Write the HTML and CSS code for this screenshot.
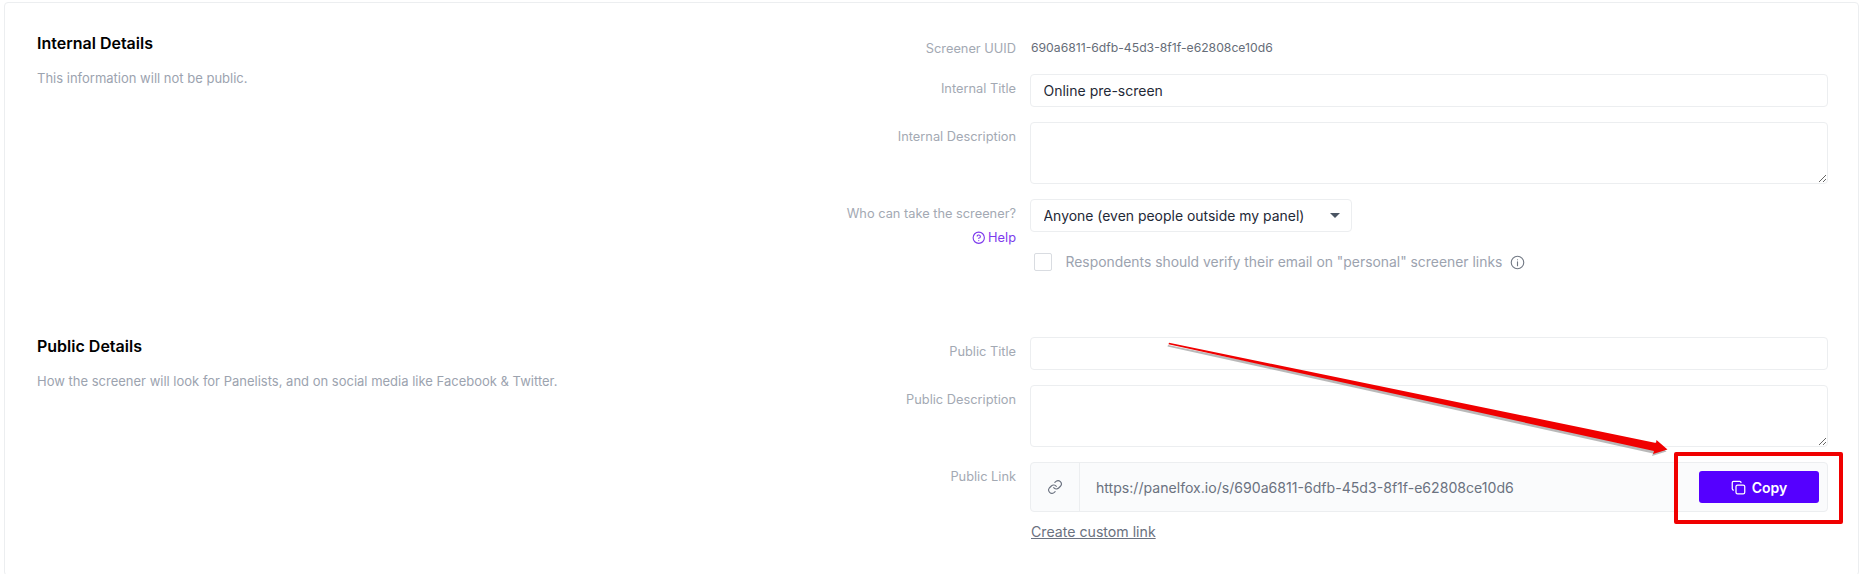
FILE: index.html
```html
<!DOCTYPE html>
<html lang="en">
<head>
<meta charset="utf-8">
<title>Screener details</title>
<link rel="stylesheet" href="styles.css">
</head>
<body>
<main class="card">
  <section class="section">
    <div class="intro">
      <h2 class="intro-title">Internal Details</h2>
      <p class="intro-text">This information will not be public.</p>
    </div>
    <div class="form">
      <div class="label">Screener UUID</div>
      <div class="value">690a6811-6dfb-45d3-8f1f-e62808ce10d6</div>

      <label class="label">Internal Title</label>
      <input class="field" type="text" value="Online pre-screen">

      <label class="label">Internal Description</label>
      <textarea class="field area"></textarea>

      <div class="label">
        <div>Who can take the screener?</div>
        <a class="help" href="#">
          <svg class="help-icon" viewBox="0 0 24 24" fill="none" stroke="currentColor" stroke-width="2" stroke-linecap="round" stroke-linejoin="round"><circle cx="12" cy="12" r="10"/><path d="M9.100 9a3 3 0 0 1 5.800 1c0 2-3 3-3 3"/><path d="M12 17h.01"/></svg>
          Help
        </a>
      </div>
      <div class="control-stack">
        <div class="select-wrap">
          <select class="select">
            <option>Anyone (even people outside my panel)</option>
          </select>
          <span class="caret"></span>
        </div>
        <div class="check-row">
          <input class="check" type="checkbox">
          <span class="check-text">Respondents should verify their email on "personal" screener links</span>
          <svg class="info-icon" viewBox="0 0 24 24" fill="none" stroke="currentColor" stroke-width="1.800" stroke-linecap="round"><circle cx="12" cy="12" r="10"/><path d="M12 11v6"/><path d="M12 7.500h.01"/></svg>
        </div>
      </div>
    </div>
  </section>

  <section class="section section-public">
    <div class="intro">
      <h2 class="intro-title">Public Details</h2>
      <p class="intro-text">How the screener will look for Panelists, and on social media like Facebook &amp; Twitter.</p>
    </div>
    <div class="form">
      <label class="label">Public Title</label>
      <input class="field" type="text">

      <label class="label">Public Description</label>
      <textarea class="field area"></textarea>

      <div class="label">Public Link</div>
      <div class="link-stack">
        <div class="link-box">
          <span class="link-icon">
            <svg viewBox="0 0 24 24" fill="none" stroke="currentColor" stroke-width="1.700" stroke-linecap="round" stroke-linejoin="round"><path d="M10 13a5 5 0 0 0 7.500.5l3-3a5 5 0 0 0-7-7l-1.700 1.700"/><path d="M14 11a5 5 0 0 0-7.500-.5l-3 3a5 5 0 0 0 7 7l1.700-1.700"/></svg>
          </span>
          <span class="link-url">https://panelfox.io/s/690a6811-6dfb-45d3-8f1f-e62808ce10d6</span>
          <button class="copy" type="button">
            <svg viewBox="0 0 24 24" fill="none" stroke="currentColor" stroke-width="2" stroke-linecap="round" stroke-linejoin="round"><rect x="8" y="8" width="14" height="14" rx="2.500"/><path d="M4 16c-1.100 0-2-.9-2-2V4c0-1.100.9-2 2-2h10c1.100 0 2 .9 2 2"/></svg>
            Copy
          </button>
        </div>
        <a class="custom-link" href="#">Create custom link</a>
      </div>
    </div>
  </section>
</main>

<div class="mark-box"></div>
<svg class="mark-arrow" viewBox="0 0 1865 574" aria-hidden="true">
  <polygon class="arrow-shadow" points="1168,345 1655,445 1655,442 1666.500,451.500 1652,456 1653,453.500 1167.500,346.500"/>
  <polygon class="arrow-fill" points="1169,342.800 1656,443 1656.500,440 1667.500,449.500 1653,454 1654,451 1168.500,344.200"/>
</svg>
</body>
</html>
```
FILE: styles.css
```css
* { box-sizing: border-box; }
html, body { margin: 0; height: 574px; overflow: hidden; background: #fff; }
body { font-family: Inter, "Liberation Sans", sans-serif; font-size: 13px; color: #111827; position: relative; }

.card {
  margin: 2px 0 0 4px;
  width: 1855px;
  height: 574px;
  padding: 31px 30px 0 32px;
  border: 1px solid #eceef0;
  border-radius: 4px;
}

.section { display: flex; justify-content: space-between; }
.section-public { margin-top: 66px; }

.intro-title { margin: 0; font-size: 16px; line-height: 18px; font-weight: 600; color: #000; }
.intro-text { margin: 16.500px 0 0; font-size: 13px; line-height: 18px; color: #9ca3af; }

.form {
  display: grid;
  grid-template-columns: 341px 798px;
  column-gap: 14px;
  row-gap: 15px;
}

.label { display: block; padding-top: 5px; text-align: right; font-size: 12.800px; line-height: 20px; color: #a3a9b3; }
.value { padding: 3.500px 0 0 1px; min-height: 23px; font-size: 12.200px; line-height: 20px; color: #666d78; }

.field {
  display: block;
  width: 100%;
  height: 33px;
  padding: 0 13px 0 12.500px;
  border: 1px solid #eceef0;
  border-radius: 4px;
  background: #fff;
  font: 400 14px Inter, "Liberation Sans", sans-serif;
  color: #1f2937;
  outline: none;
}
.area { height: 62px; resize: vertical; }

.help { display: inline-flex; align-items: center; gap: 3px; margin-top: 4px; color: #7c3aed; text-decoration: none; }
.help-icon { width: 13.500px; height: 13.500px; }

.control-stack { display: flex; flex-direction: column; gap: 21px; }
.select-wrap { position: relative; width: 322px; }
.select {
  display: block;
  width: 100%;
  height: 33px;
  padding: 0 12px 0 12.500px;
  border: 1px solid #eceef0;
  border-radius: 4px;
  background: #fff;
  font: 400 13.950px Inter, "Liberation Sans", sans-serif;
  color: #1f2937;
  appearance: none;
  -webkit-appearance: none;
}
.caret {
  position: absolute;
  left: 300px;
  top: 14px;
  border-left: 5px solid transparent;
  border-right: 5px solid transparent;
  border-top: 5px solid #4b5563;
}

.check-row { display: flex; align-items: center; height: 18px; padding-left: 4px; }
.check {
  appearance: none;
  -webkit-appearance: none;
  width: 18px;
  height: 18px;
  margin: 0 13.500px 0 0;
  border: 1px solid #d9dce1;
  border-radius: 2px;
  background: #fff;
}
.check-text { font-size: 13.900px; color: #9ca3af; white-space: nowrap; }
.info-icon { width: 15px; height: 15px; margin-left: 8px; color: #727985; }

.link-stack { display: flex; flex-direction: column; }
.link-box {
  display: flex;
  align-items: center;
  height: 50px;
  padding-right: 8px;
  border: 1px solid #eceef0;
  border-radius: 4px;
  background: #fafbfc;
}
.link-icon {
  display: flex;
  align-items: center;
  justify-content: center;
  flex: none;
  width: 49px;
  height: 100%;
  border-right: 1px solid #eceef0;
  color: #6b7280;
}
.link-icon svg { width: 16px; height: 16px; }
.link-url { flex: 1; padding-left: 16px; font-size: 14.100px; color: #6b7280; }

.copy {
  display: flex;
  align-items: center;
  justify-content: center;
  gap: 6px;
  width: 120px;
  height: 32px;
  border: 0;
  border-radius: 3px;
  background: #5500ff;
  color: #fff;
  font: 600 14px Inter, "Liberation Sans", sans-serif;
}
.copy svg { width: 15px; height: 15px; }

.custom-link { margin: 10px 0 0 1px; align-self: flex-start; font-size: 14.150px; line-height: 20px; color: #6b7280; }

.mark-box {
  position: absolute;
  left: 1674px;
  top: 452px;
  width: 169px;
  height: 72px;
  border: 4px solid #f00000;
  border-radius: 2px;
}
.mark-arrow { position: absolute; left: 0; top: 0; width: 1865px; height: 574px; pointer-events: none; }
.arrow-shadow { fill: #8a8a8a; opacity: .6; }
.arrow-fill { fill: #f00000; }
```
